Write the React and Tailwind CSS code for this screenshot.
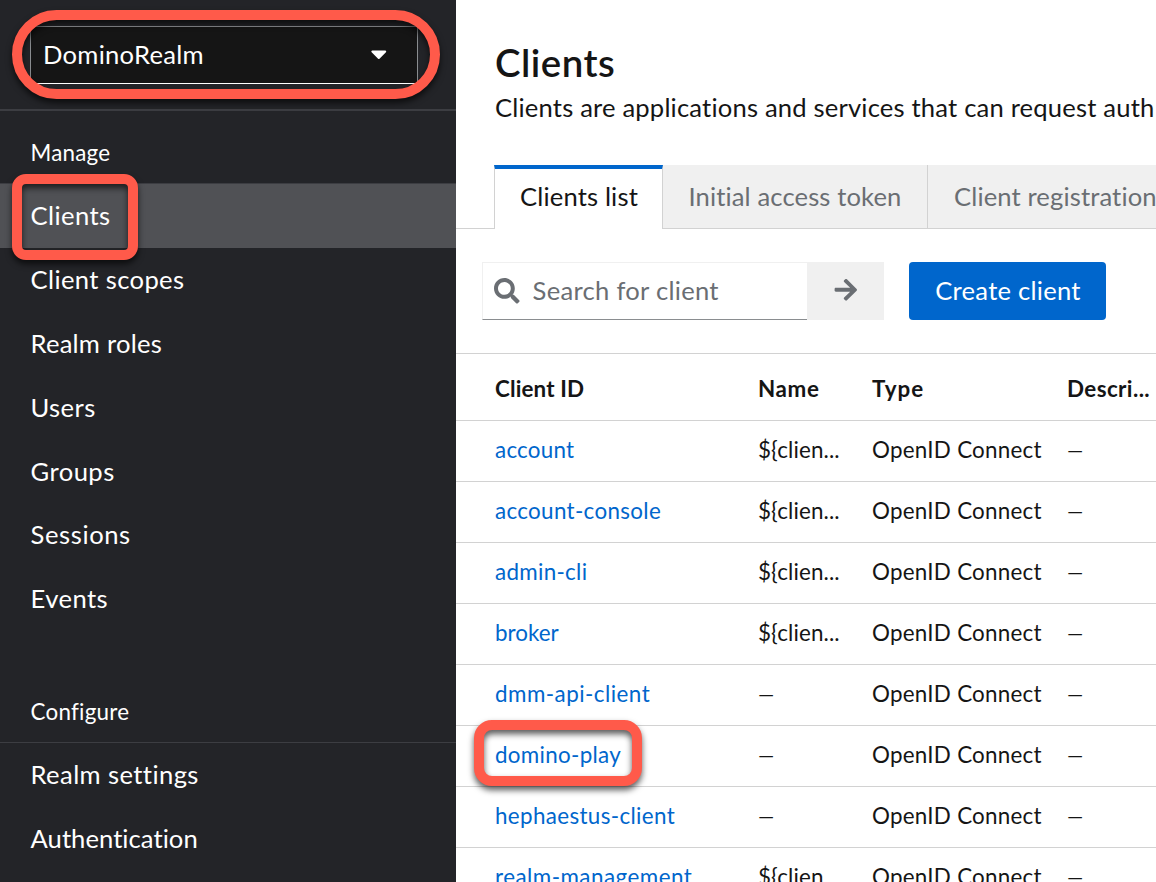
import React, { useState } from "react";
import { FaArrowRight, FaCaretDown, FaSearch } from "react-icons/fa";

const manageItems = [
  { label: "Clients", className: "tracking-[0.4px]" },
  { label: "Client scopes", className: "tracking-[0.37px]" },
  { label: "Realm roles", className: "tracking-[0.22px]" },
  { label: "Users", className: "tracking-[0.4px]" },
  { label: "Groups", className: "tracking-[0.45px]" },
  { label: "Sessions", className: "tracking-[0.6px]" },
  { label: "Events", className: "tracking-[0.45px]" },
];

const configureItems = [
  { label: "Realm settings", className: "tracking-[0.4px]" },
  { label: "Authentication", className: "tracking-[0.05px]" },
];

const clients = [
  { id: "account", name: "${clien...", className: "tracking-[0.25px]" },
  { id: "account-console", name: "${clien...", className: "tracking-[0.33px]" },
  { id: "admin-cli", name: "${clien...", className: "tracking-[0.3px]" },
  { id: "broker", name: "${clien...", className: "tracking-[0px]" },
  { id: "dmm-api-client", name: "", className: "tracking-[0.47px]" },
  { id: "domino-play", name: "", className: "tracking-[0.3px]", marked: true },
  { id: "hephaestus-client", name: "", className: "tracking-[0.35px]" },
  { id: "realm-management", name: "${clien...", className: "tracking-[0.47px]" },
];

// red outline drawn over the highlighted element
const Callout = ({ className }) => (
  <span
    className={`pointer-events-none absolute z-10 border-10 border-[#ff5a4a] drop-shadow-[0_4px_3px_rgba(0,0,0,0.65)] ${className}`}
  />
);

const Empty = () => <span className="block pt-px text-[20.5px]">—</span>;

const NavItem = ({ item, active, onClick }) => (
  <li className={`relative h-[63.85px] ${active ? "bg-[#505155]" : ""}`}>
    <button
      onClick={onClick}
      className={`flex h-full w-full items-center pl-[30.5px] text-[25.6px] leading-none ${item.className}`}
    >
      {item.label}
    </button>
    {item.label === "Clients" && (
      <Callout className="-top-[10px] left-3 h-[86px] w-[126px] rounded-[14px]" />
    )}
  </li>
);

const Sidebar = () => {
  const [active, setActive] = useState("Clients");

  return (
    <aside className="w-[456px] shrink-0 bg-[#232428] text-white">
      <div className="h-[111px] border-b-2 border-[#3c3d42] pt-[26px] pl-[30px]">
        <div className="relative w-[388px]">
          <button className="flex h-[58px] w-full items-center justify-between border border-[#8a8d90] border-b-white bg-[#151515] pr-[25px] pb-0.5 pl-3 text-[25.6px]">
            <span className="tracking-[0.27px]">DominoRealm</span>
            <FaCaretDown />
          </button>
          <Callout className="-top-4 -left-[18px] h-[89px] w-[428px] rounded-[45px]" />
        </div>
      </div>

      {/* Manage */}
      <h2 className="flex h-[73px] items-center border-b border-[#3c3d42] pt-[11px] pl-[30.5px] text-[22.4px] tracking-[0.2px]">
        Manage
      </h2>
      <ul>
        {manageItems.map((item) => (
          <NavItem
            key={item.label}
            item={item}
            active={active === item.label}
            onClick={() => setActive(item.label)}
          />
        ))}
      </ul>

      {/* Configure */}
      <h2 className="mt-[51.4px] flex h-[61px] items-center border-b border-[#3c3d42] pl-[30.5px] text-[22.4px] tracking-[0.25px]">
        Configure
      </h2>
      <ul>
        {configureItems.map((item) => (
          <NavItem
            key={item.label}
            item={item}
            active={active === item.label}
            onClick={() => setActive(item.label)}
          />
        ))}
      </ul>
    </aside>
  );
};

const Tabs = () => (
  <div className="flex h-16 w-[800px] text-[25.6px] whitespace-nowrap text-[#6a6e73]">
    <div className="w-[38px] border-b border-[#d2d2d2]" />
    <button className="w-[169px] border-x border-t-4 border-x-[#d2d2d2] border-t-[#0066cc] pb-[5px] pl-px tracking-[0.15px] text-[#151515]">
      Clients list
    </button>
    <button className="w-[265px] border-r border-b border-[#d2d2d2] bg-[#f0f0f0] tracking-[0.12px]">
      Initial access token
    </button>
    <button className="flex-1 border-b border-[#d2d2d2] bg-[#f0f0f0] pl-[26px] text-left tracking-[0.12px]">
      Client registration
    </button>
  </div>
);

const Toolbar = () => (
  <div className="mt-[33px] flex h-[58px] pl-[26px] text-[25.6px]">
    <label className="flex w-[325px] items-center border border-r-0 border-[#f0f0f0] border-b-[#8a8d90] pl-[11px] text-[#6a6e73]">
      <FaSearch className="mr-[13px] shrink-0" />
      <input
        placeholder="Search for client"
        className="w-[260px] pb-0.5 tracking-[0.28px] outline-none placeholder:text-[#6a6e73]"
      />
    </label>
    <button className="flex w-[77px] items-center justify-center bg-[#f0f0f0] pb-0.5 text-[#6a6e73]">
      <FaArrowRight />
    </button>
    <button className="ml-[25px] w-[197px] rounded bg-[#0066cc] pb-0.5 pl-px tracking-[0.25px] text-white">
      Create client
    </button>
  </div>
);

const ClientsTable = () => (
  <div className="mt-[33px] border-t border-[#d2d2d2] text-[22.4px] text-[#151515]">
    <div className="grid h-[67px] grid-cols-[263px_114px_195px_90px] items-center border-b border-[#d2d2d2] pt-[3px] pl-[39px] font-bold">
      <div className="tracking-[0.15px]">Client ID</div>
      <div className="tracking-[0.6px]">Name</div>
      <div className="tracking-[1.1px]">Type</div>
      <div className="tracking-[0.4px]">Descri...</div>
    </div>
    {clients.map((client) => (
      <div
        key={client.id}
        className="grid h-[61px] grid-cols-[263px_114px_195px_90px] items-center border-b border-[#d2d2d2] pb-0.5 pl-[39px]"
      >
        <div className="relative">
          <a href="#" className={`text-[#0066cc] ${client.className}`}>
            {client.id}
          </a>
          {client.marked && (
            <Callout className="-top-[18px] -left-[21px] h-[66px] w-[168px] rounded-[18px]" />
          )}
        </div>
        <div className="tracking-[0.12px]">{client.name || <Empty />}</div>
        <div className="tracking-[0.25px]">OpenID Connect</div>
        <Empty />
      </div>
    ))}
  </div>
);

const App = () => {
  return (
    <div className="flex h-[882px] w-[1156px] overflow-hidden bg-white font-['Lato',sans-serif]">
      <Sidebar />
      <main className="min-w-0 flex-1 overflow-hidden text-[#151515]">
        <div className="h-[165px] pt-[37px] pl-[39px] whitespace-nowrap">
          <h1 className="text-[38.4px] leading-[51px] font-semibold tracking-[0.5px]">
            Clients
          </h1>
          <p className="text-[25.6px] leading-[38px] tracking-[0.18px]">
            Clients are applications and services that can request auth
          </p>
        </div>
        <Tabs />
        <Toolbar />
        <ClientsTable />
      </main>
    </div>
  );
};

export default App;
